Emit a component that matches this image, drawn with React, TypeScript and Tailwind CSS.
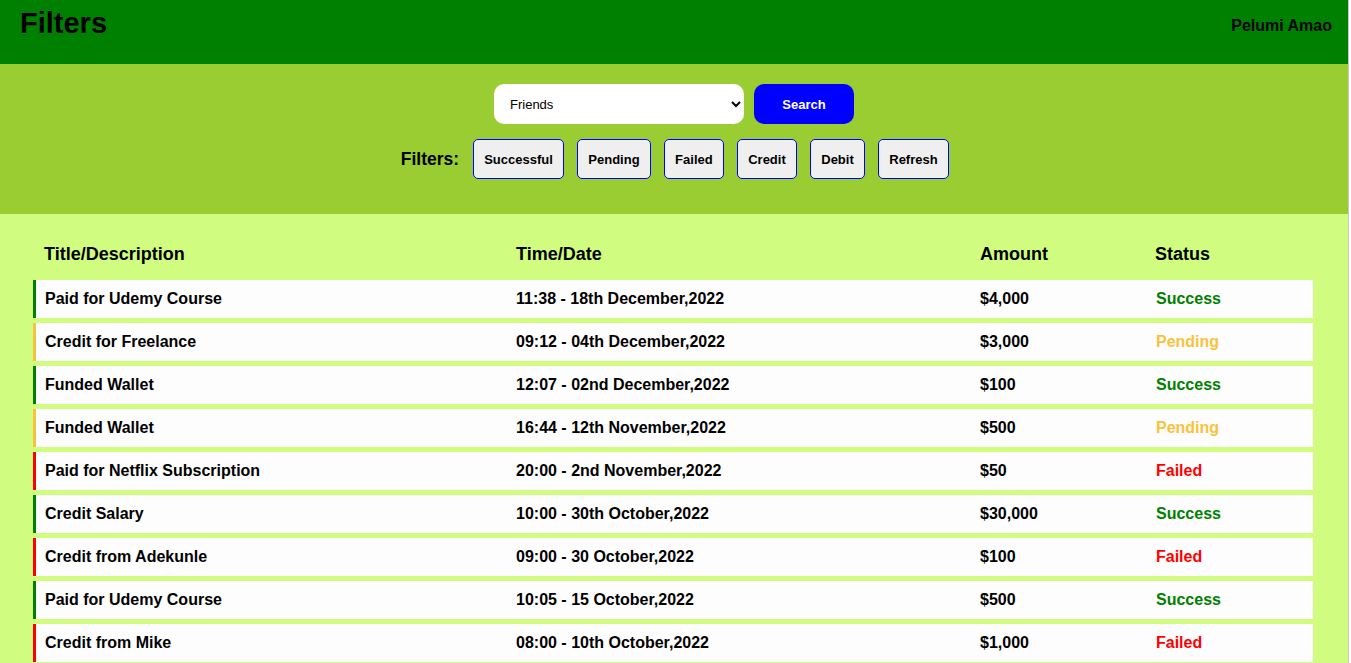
type Status = 'Success' | 'Pending' | 'Failed'

type Transaction = {
  title: string
  time: string
  amount: string
  status: Status
}

const transactions: Transaction[] = [
  { title: 'Paid for Udemy Course', time: '11:38 - 18th December,2022', amount: '$4,000', status: 'Success' },
  { title: 'Credit for Freelance', time: '09:12 - 04th December,2022', amount: '$3,000', status: 'Pending' },
  { title: 'Funded Wallet', time: '12:07 - 02nd December,2022', amount: '$100', status: 'Success' },
  { title: 'Funded Wallet', time: '16:44 - 12th November,2022', amount: '$500', status: 'Pending' },
  { title: 'Paid for Netflix Subscription', time: '20:00 - 2nd November,2022', amount: '$50', status: 'Failed' },
  { title: 'Credit Salary', time: '10:00 - 30th October,2022', amount: '$30,000', status: 'Success' },
  { title: 'Credit from Adekunle', time: '09:00 - 30 October,2022', amount: '$100', status: 'Failed' },
  { title: 'Paid for Udemy Course', time: '10:05 - 15 October,2022', amount: '$500', status: 'Success' },
  { title: 'Credit from Mike', time: '08:00 - 10th October,2022', amount: '$1,000', status: 'Failed' },
]

const borderColor: Record<Status, string> = {
  Success: 'border-l-[#008000]',
  Pending: 'border-l-[#f9c23c]',
  Failed: 'border-l-[#ff0000]',
}

const textColor: Record<Status, string> = {
  Success: 'text-[#008000]',
  Pending: 'text-[#f9c23c]',
  Failed: 'text-[#ff0000]',
}

const filters = ['Successful', 'Pending', 'Failed', 'Credit', 'Debit', 'Refresh']

const cols = 'grid w-[1280px] grid-cols-[483px_464px_175px_158px]'

export default function App() {
  return (
    <div className="flex h-[663px] overflow-hidden bg-white font-['Liberation_Sans',Arial,sans-serif] text-black">
      <div className="w-[1349px] shrink-0 border-r border-[#c8c8c8]">
        <header className="flex h-16 items-start justify-between bg-[#008000] pl-5 pr-4">
          <h1 className="mt-[5px] text-[29px] font-bold leading-[37px]">Filters</h1>
          <span className="mt-[14px] text-base font-bold">Pelumi Amao</span>
        </header>

        <section className="flex h-[150px] flex-col items-center bg-[#9acd32] pt-5">
          <div className="flex gap-[10px]">
            <select
              defaultValue="Friends"
              className="h-10 w-[250px] rounded-[10px] bg-white pl-3 pr-1 text-[13px] outline-none"
            >
              <option>Friends</option>
              <option>Family</option>
              <option>Work</option>
            </select>
            <button
              type="button"
              className="h-10 w-[100px] rounded-[10px] bg-[#0000ff] pt-px text-[13px] font-bold text-white"
            >
              Search
            </button>
          </div>

          <div className="mt-[15px] flex items-center gap-[12.5px] pl-[2px]">
            <span className="mr-[1px] text-[17.5px] font-bold">Filters:</span>
            {filters.map((f) => (
              <button
                key={f}
                type="button"
                className="h-10 rounded-[5px] border border-[#0000ff] bg-[#efefef] px-[10.5px] pt-px text-[13px] font-bold"
              >
                {f}
              </button>
            ))}
          </div>
        </section>

        <main className="h-[449px] bg-[#d0fd7f] pl-[33px] pt-[18px]">
          <div className={`${cols} h-[43px] items-center text-lg font-bold`}>
            <div className="pl-[11px]">Title/Description</div>
            <div>Time/Date</div>
            <div>Amount</div>
            <div>Status</div>
          </div>
          <div className="mt-[5px] flex flex-col gap-[5px]">
            {transactions.map((t, i) => (
              <div
                key={i}
                className={`${cols} h-[38px] items-center border-l-[3px] bg-[#fdfdfd] text-base font-bold ${borderColor[t.status]}`}
              >
                <div className="pl-[9px]">{t.title}</div>
                <div className="-ml-[3px]">{t.time}</div>
                <div className="-ml-[3px]">{t.amount}</div>
                <div className={`-ml-[2px] ${textColor[t.status]}`}>{t.status}</div>
              </div>
            ))}
          </div>
        </main>
      </div>
    </div>
  )
}
